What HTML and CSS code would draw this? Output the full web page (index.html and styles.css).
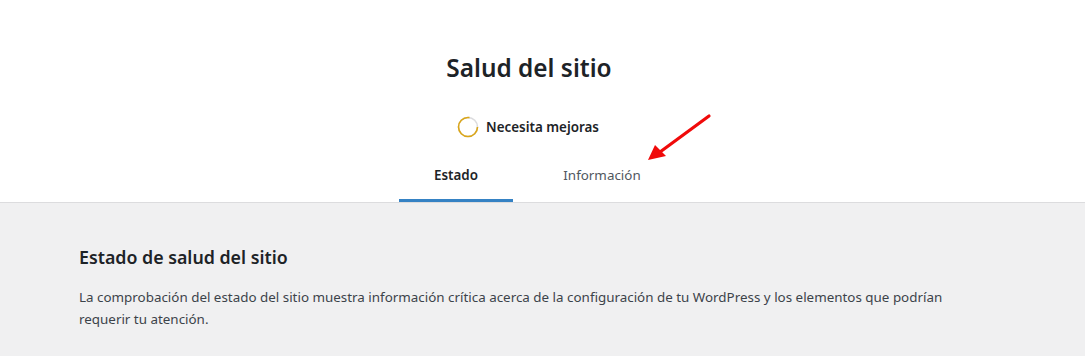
FILE: index.html
```html
<!DOCTYPE html>
<html lang="es">
<head>
<meta charset="utf-8">
<title>Salud del sitio</title>
<link rel="stylesheet" href="styles.css">
</head>
<body>
<div class="page">
  <header class="hc-header">
    <div class="hc-inner">
      <h1 class="hc-title">Salud del sitio</h1>
      <div class="hc-status">
        <svg class="hc-ring" width="22" height="22" viewBox="0 0 22 22" aria-hidden="true">
          <circle cx="11" cy="11" r="9.5" fill="none" stroke="#dcdcde" stroke-width="1.6"/>
          <circle cx="11" cy="11" r="9.5" fill="none" stroke="#dba617" stroke-width="1.6" stroke-dasharray="46 60"/>
        </svg>
        <span class="hc-status-label">Necesita mejoras</span>
      </div>
      <nav class="hc-tabs">
        <a class="hc-tab active" href="#">Estado</a>
        <a class="hc-tab" href="#">Información</a>
      </nav>
    </div>
    <svg class="hc-arrow" width="80" height="60" viewBox="0 0 80 60" aria-hidden="true">
      <line x1="69" y1="6" x2="20" y2="42" stroke="#f00a0a" stroke-width="3.2" stroke-linecap="round"/>
      <polygon points="8,50 15,35 26,46" fill="#f00a0a"/>
    </svg>
  </header>
  <main class="hc-body">
    <h2 class="hc-heading">Estado de salud del sitio</h2>
    <p class="hc-text">La comprobación del estado del sitio muestra información crítica acerca de la configuración de tu WordPress y los elementos que podrían requerir tu atención.</p>
  </main>
</div>
</body>
</html>
```

FILE: styles.css
```css
html, body {
  margin: 0;
  padding: 0;
}
body {
  background: #f0f0f1;
  font-family: "Noto Sans", "Open Sans", sans-serif;
  color: #3c434a;
  font-size: 13px;
}
.page {
  min-height: 356px;
}
.hc-header {
  position: relative;
  background: #fff;
  border-bottom: 1px solid #dcdcde;
  height: 203px;
  box-sizing: border-box;
}
.hc-inner {
  width: 1058px;
  display: flex;
  flex-direction: column;
  align-items: center;
  padding-top: 53px;
}
.hc-title {
  margin: 0;
  font-size: 24.4px;
  font-weight: 600;
  line-height: 30px;
  color: #1d2327;
}
.hc-status {
  margin-top: 33px;
  display: flex;
  align-items: center;
  gap: 7px;
  height: 22px;
  padding-right: 2px;
}
.hc-ring {
  display: block;
}
.hc-status-label {
  font-size: 13.4px;
  font-weight: 600;
  color: #1d2327;
  line-height: 20px;
}
.hc-tabs {
  margin-top: 19px;
  display: grid;
  grid-template-columns: 1fr 1fr;
}
.hc-tab {
  display: block;
  text-decoration: none;
  color: #50575e;
  padding: 8px 16px 17px;
  margin: 0 16px;
  text-align: center;
  font-size: 13.4px;
  line-height: 20px;
  width: 82px;
}
.hc-tab.active {
  color: #1d2327;
  font-weight: 600;
  box-shadow: inset 0 -3px #3582c4;
}
.hc-arrow {
  position: absolute;
  left: 640px;
  top: 110px;
}
.hc-body {
  padding: 42px 0 0 79px;
  width: 900px;
}
.hc-heading {
  margin: 0;
  font-size: 17.8px;
  font-weight: 600;
  line-height: 24px;
  color: #1d2327;
}
.hc-text {
  margin: 17px 0 0;
  font-size: 13.4px;
  line-height: 22px;
  color: #3c434a;
}
```
